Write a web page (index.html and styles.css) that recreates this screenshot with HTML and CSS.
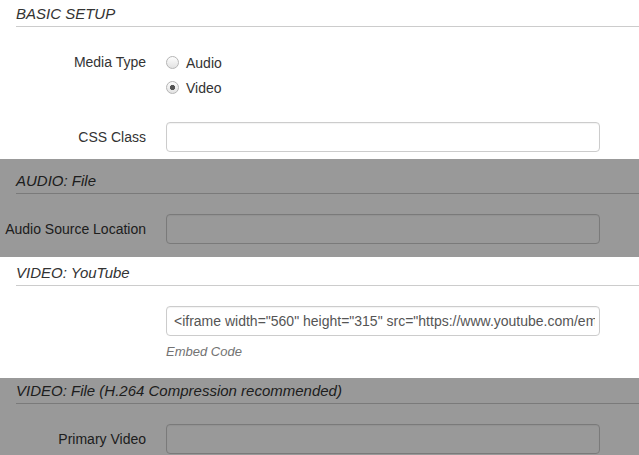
FILE: index.html
```html
<!DOCTYPE html>
<html>
<head>
<meta charset="utf-8">
<link rel="stylesheet" href="styles.css">
</head>
<body>
<div class="page">
  <section class="section sec-basic">
    <h3 class="sec-title">BASIC SETUP</h3>
    <div class="row row-top">
      <label class="lbl lbl-radio">Media Type</label>
      <div class="radios">
        <label class="radio"><input type="radio" name="mt"> <span>Audio</span></label>
        <label class="radio"><input type="radio" name="mt" checked> <span>Video</span></label>
      </div>
    </div>
    <div class="row">
      <label class="lbl">CSS Class</label>
      <input class="field" type="text">
    </div>
  </section>

  <section class="section sec-audio disabled">
    <h3 class="sec-title">AUDIO: File</h3>
    <div class="row">
      <label class="lbl">Audio Source Location</label>
      <input class="field" type="text">
    </div>
  </section>

  <section class="section sec-yt">
    <h3 class="sec-title">VIDEO: YouTube</h3>
    <div class="row">
      <span class="lbl"></span>
      <div class="col">
        <input class="field" type="text" value='&lt;iframe width="560" height="315" src="https://www.youtube.com/embed/abcdefghijk" frameborder="0" allowfullscreen&gt;&lt;/iframe&gt;'>
        <div class="help">Embed Code</div>
      </div>
    </div>
  </section>

  <section class="section sec-vfile disabled">
    <h3 class="sec-title">VIDEO: File (H.264 Compression recommended)</h3>
    <div class="row">
      <label class="lbl">Primary Video</label>
      <input class="field" type="text">
    </div>
  </section>
</div>
</body>
</html>
```

FILE: styles.css
```css
html, body {
  margin: 0;
  padding: 0;
  background: #fff;
}
body {
  width: 639px;
  height: 455px;
  overflow: hidden;
  font-family: "Liberation Sans", Arial, sans-serif;
  font-size: 14px;
  color: #333;
}
.page {
  display: flex;
  flex-direction: column;
}
.section {
  position: relative;
}
.disabled::after {
  content: "";
  position: absolute;
  inset: 0;
  background: rgba(0, 0, 0, 0.4);
  z-index: 5;
}
.sec-basic { padding: 5px 0 7px; }
.sec-audio { padding: 13px 0 13px; }
.sec-yt { padding: 7px 0 17px; }
.sec-vfile { padding: 4px 0 20px; }

.sec-title {
  margin: 0 0 20px 16px;
  padding: 0 0 3px;
  font-size: 15px;
  line-height: 18px;
  font-style: italic;
  font-weight: normal;
  color: #333;
  border-bottom: 1px solid #cccccc;
}
.row {
  display: flex;
  align-items: center;
  gap: 20px;
}
.row-top {
  align-items: flex-start;
  margin-bottom: 22px;
}
.lbl {
  width: 146px;
  flex: none;
  text-align: right;
  white-space: nowrap;
  line-height: 20px;
  color: #333;
}
.lbl-radio {
  padding-top: 3px;
  line-height: 25px;
}
.radios {
  display: flex;
  flex-direction: column;
  padding-top: 3px;
}
.radio {
  display: flex;
  align-items: center;
  height: 25px;
  gap: 7px;
  color: #333;
}
.radio input {
  appearance: none;
  -webkit-appearance: none;
  margin: 0;
  width: 13px;
  height: 13px;
  border-radius: 50%;
  border: 1px solid #b5b5b5;
  background: linear-gradient(#fdfdfd, #e2e2e2);
  box-sizing: border-box;
}
.radio input:checked {
  background: radial-gradient(circle, #555 0, #555 2.3px, transparent 2.9px), linear-gradient(#fdfdfd, #e2e2e2);
}
.field {
  width: 434px;
  height: 30px;
  box-sizing: border-box;
  margin: 0;
  border: 1px solid #cccccc;
  border-radius: 4px;
  padding: 0 4px 0 7px;
  font-family: "Liberation Sans", Arial, sans-serif;
  font-size: 14px;
  color: #555;
  background: #fff;
  box-shadow: inset 0 1px 1px rgba(0,0,0,0.05);
  outline: none;
}
.col {
  display: flex;
  flex-direction: column;
}
.help {
  margin-top: 7px;
  font-size: 13px;
  line-height: 18px;
  font-style: italic;
  color: #737373;
}
```
